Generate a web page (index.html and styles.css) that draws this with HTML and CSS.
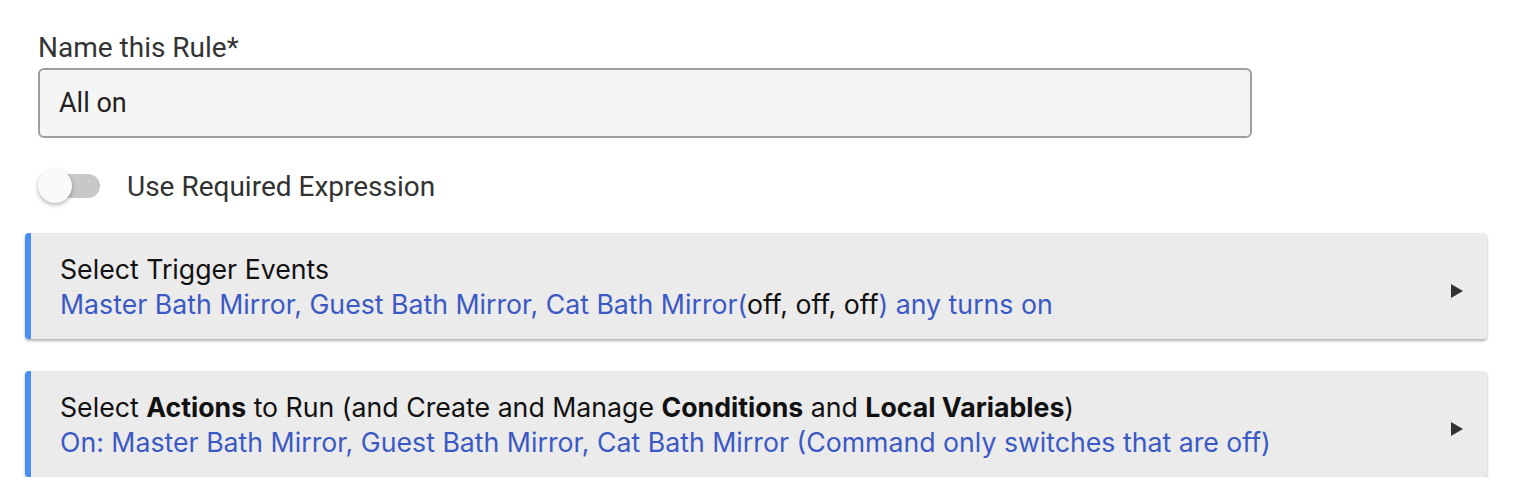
FILE: index.html
```html
<!DOCTYPE html>
<html lang="en">
<head>
    <meta charset="UTF-8">
    <meta name="viewport" content="width=device-width, initial-scale=1.0">
    <title>Rule Machine</title>
    <link rel="stylesheet" href="styles.css">
</head>
<body>
    <div class="page">
        <div class="field">
            <label for="ruleName">Name this Rule*</label>
            <input type="text" id="ruleName" value="All on">
        </div>
        <div class="toggle-row">
            <span class="switch"><span class="knob"></span></span>
            <span class="toggle-label">Use Required Expression</span>
        </div>
        <div class="card">
            <div class="card-text">
                <div class="card-title">Select Trigger Events</div>
                <div class="card-desc">Master Bath Mirror, Guest Bath Mirror, Cat Bath Mirror(<span class="state">off, off, off</span>) any turns on</div>
            </div>
            <svg class="arrow" width="12" height="14" viewBox="0 0 12 14"><path d="M0 0 L12 7 L0 14 Z" fill="#333"/></svg>
        </div>
        <div class="card">
            <div class="card-text">
                <div class="card-title">Select <b>Actions</b> to Run (and Create and Manage <b>Conditions</b> and <b>Local Variables</b>)</div>
                <div class="card-desc">On: Master Bath Mirror, Guest Bath Mirror, Cat Bath Mirror (Command only switches that are off)</div>
            </div>
            <svg class="arrow" width="12" height="14" viewBox="0 0 12 14"><path d="M0 0 L12 7 L0 14 Z" fill="#333"/></svg>
        </div>
    </div>
</body>
</html>
```

FILE: styles.css
```css
body {
    margin: 0;
    padding: 0;
    background-color: #fff;
    font-family: Roboto, Arial, sans-serif;
    color: #333;
}
.page {
    width: 1462px;
    padding: 33px 0 0 25px;
}
.field {
    padding-left: 13px;
}
.field label {
    display: block;
    font-size: 28px;
    line-height: 30px;
    color: #333;
}
.field input {
    display: block;
    box-sizing: border-box;
    width: 1214px;
    height: 70px;
    margin-top: 5px;
    padding: 0 19px;
    border: 2px solid #9e9e9e;
    border-radius: 6px;
    background-color: #f5f5f5;
    font-family: Roboto, Arial, sans-serif;
    font-size: 27px;
    color: #222;
    outline: none;
}
.toggle-row {
    display: flex;
    align-items: center;
    height: 34px;
    margin: 31px 0 0 13px;
}
.switch {
    position: relative;
    display: block;
    width: 60px;
    height: 24px;
    margin-left: 2px;
    border-radius: 12px;
    background-color: #c8c8c8;
}
.knob {
    position: absolute;
    left: -2px;
    top: -5px;
    width: 34px;
    height: 34px;
    border-radius: 50%;
    background-color: #fafafa;
    box-shadow: 0 2px 4px rgba(0, 0, 0, 0.3);
}
.toggle-label {
    margin-left: 27px;
    font-size: 28px;
    color: #333;
}
.card {
    display: flex;
    align-items: center;
    box-sizing: border-box;
    height: 106px;
    margin-top: 32px;
    padding: 0 24px 0 29px;
    border-left: 6px solid #4a8ff5;
    border-radius: 4px;
    background-color: #ebebeb;
    box-shadow: 0 2px 3px rgba(0, 0, 0, 0.3);
    font-family: Inter, "Open Sans", sans-serif;
    font-size: 26.7px;
    line-height: 35px;
}
.toggle-row + .card {
    margin-top: 30px;
}
.card-text {
    flex: 1;
    padding-top: 2px;
}
.card-title {
    color: #111;
}
.card-title b {
    font-weight: 700;
}
.card-desc {
    color: #3b59c4;
}
.state {
    color: #111;
}
.arrow {
    margin-top: 10px;
}
```
